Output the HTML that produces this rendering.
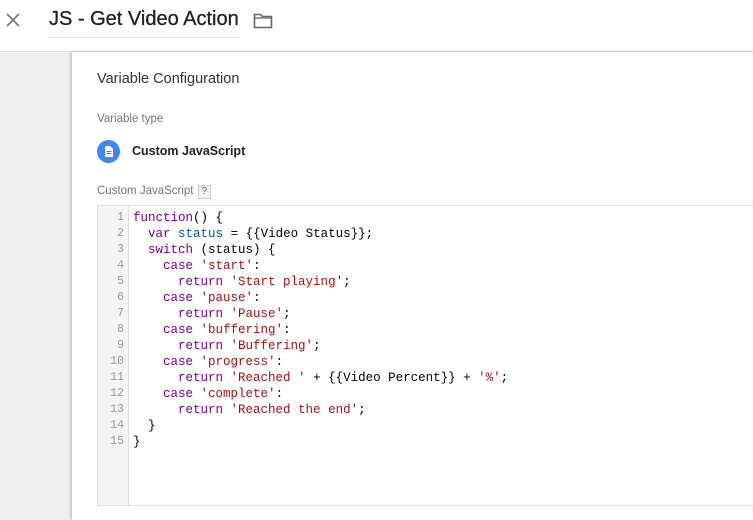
<!DOCTYPE html>
<html><head><style>
body{margin:0;width:753px;height:520px;overflow:hidden;background:#fff;font-family:"Liberation Sans",sans-serif;position:relative}
.hdr{position:absolute;left:0;top:0;width:753px;height:51px;border-bottom:1px solid #e0e0e0;background:#fff}
.title{position:absolute;left:49px;top:8px;font-size:20px;color:#212121;padding-bottom:6px;border-bottom:1px solid #ddd;width:191px;-webkit-text-stroke:0.3px #212121}
.gray{position:absolute;left:0;top:52px;width:72px;height:468px;background:#eeeeee}
.card{position:absolute;left:72px;top:52px;width:681px;height:468px;background:#fff;box-shadow:-1px 0 3px rgba(0,0,0,.25)}
.h{position:absolute;left:25px;top:19px;font-size:14.5px;color:#333}
.lbl{position:absolute;left:25px;font-size:11.5px;color:#757575}
.ct{position:absolute;left:60px;top:92px;font-size:12.5px;color:#222;font-weight:bold}
.ic{position:absolute;left:25px;top:88px;width:23px;height:23px;border-radius:50%;background:#4285f4}
.q{display:inline-block;border:1px solid #ccc;background:#f3f3f3;font-size:10px;padding:0 3px;margin-left:4px;color:#666;line-height:12px}
.code{position:absolute;left:25px;top:153px;width:660px;height:299px;border:1px solid #ddd;border-right:none}
.gut{position:absolute;left:0;top:0;width:30px;height:299px;background:#f5f5f5;border-right:1px solid #ddd}
pre{margin:0;font-family:"Liberation Mono",monospace;font-size:12.5px;line-height:16px;position:absolute;top:4px}
.ln{left:0;width:26px;text-align:right;color:#999;font-size:11.5px}
.src{left:35px;color:#000}
.k{color:#708}.v{color:#05a}.s{color:#a11}
</style></head><body>
<div class="hdr">
<svg style="position:absolute;left:6px;top:13px" width="14" height="14" viewBox="0 0 14 14"><path d="M1 1L13 13M13 1L1 13" stroke="#757575" stroke-width="1.6"/></svg>
<div class="title">JS - Get Video Action</div>
<svg style="position:absolute;left:253px;top:12px" width="20" height="17" viewBox="0 0 20 17"><path d="M1.5 2.5h6l2 2h9v11h-17z" fill="none" stroke="#666" stroke-width="1.6"/><path d="M1.5 6h17" stroke="#666" stroke-width="1.2"/></svg></div>
<div class="gray"></div>
<div class="card">
<div class="h">Variable Configuration</div>
<div class="lbl" style="top:61px">Variable type</div>
<div class="ic"><svg width="23" height="23" viewBox="0 0 23 23"><path d="M8 6h5l3 3v8H8z" fill="#fff"/><path d="M9.5 11.5h5M9.5 13.5h5" stroke="#4285f4" stroke-width="1"/></svg></div>
<div class="ct">Custom JavaScript</div>
<div class="lbl" style="top:133px">Custom JavaScript<span class="q">?</span></div>
<div class="code"><div class="gut"></div>
<pre class="ln">1
2
3
4
5
6
7
8
9
10
11
12
13
14
15</pre>
<pre class="src"><span class="k">function</span>() {
  <span class="k">var</span> <span class="v">status</span> = {{Video Status}};
  <span class="k">switch</span> (status) {
    <span class="k">case</span> <span class="s">'start'</span>:
      <span class="k">return</span> <span class="s">'Start playing'</span>;
    <span class="k">case</span> <span class="s">'pause'</span>:
      <span class="k">return</span> <span class="s">'Pause'</span>;
    <span class="k">case</span> <span class="s">'buffering'</span>:
      <span class="k">return</span> <span class="s">'Buffering'</span>;
    <span class="k">case</span> <span class="s">'progress'</span>:
      <span class="k">return</span> <span class="s">'Reached '</span> + {{Video Percent}} + <span class="s">'%'</span>;
    <span class="k">case</span> <span class="s">'complete'</span>:
      <span class="k">return</span> <span class="s">'Reached the end'</span>;
  }
}</pre></div>
</div>
</body></html>
